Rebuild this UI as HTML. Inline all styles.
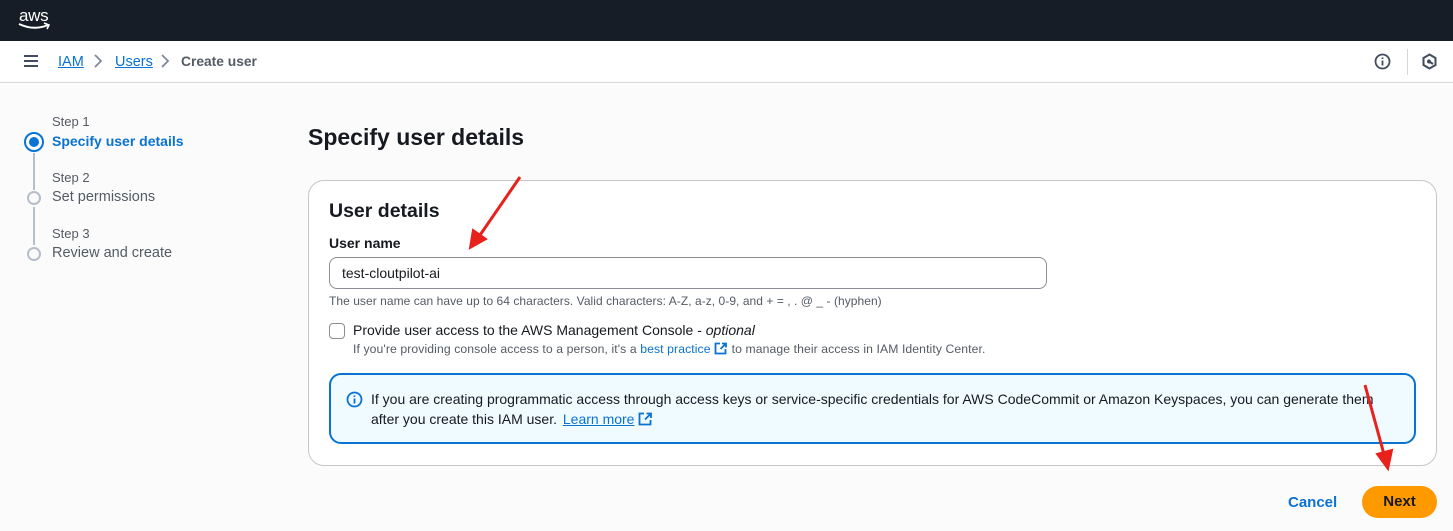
<!DOCTYPE html>
<html><head><meta charset="utf-8"><style>
*{margin:0;padding:0;box-sizing:border-box}
body{width:1453px;height:531px;overflow:hidden;background:#fbfbfb;font-family:"Liberation Sans",Arial,sans-serif;color:#16191f;position:relative}
.a{position:absolute}
a{color:#0972d3}
</style></head><body>
<div class="a" style="left:0;top:0;width:1453px;height:41px;background:#161d26"></div>
<div class="a" style="left:19px;top:6px;color:#fff;font-size:17px;letter-spacing:-0.3px">aws</div>
<svg class="a" style="left:18px;top:22px" width="34" height="9"><path d="M1 2 Q16 9 30 3" stroke="#fff" stroke-width="2" fill="none"/><path d="M26 1 L31 3 L29 7" stroke="#fff" stroke-width="1.6" fill="none"/></svg>
<div class="a" style="left:0;top:41px;width:1453px;height:42px;background:#fff;border-bottom:1px solid #d5d7db"></div>
<svg class="a" style="left:23px;top:54px" width="16" height="14"><path d="M1 2H15M1 7H15M1 12H15" stroke="#414d5c" stroke-width="2"/></svg>
<div class="a" style="left:58px;top:54px;font-size:14.5px"><a style="text-decoration:underline">IAM</a></div>
<svg class="a" style="left:93px;top:54px" width="10" height="14"><path d="M2 1L8 7L2 13" stroke="#7d8998" stroke-width="1.8" fill="none"/></svg>
<div class="a" style="left:115px;top:54px;font-size:14.5px"><a style="text-decoration:underline">Users</a></div>
<svg class="a" style="left:160px;top:54px" width="10" height="14"><path d="M2 1L8 7L2 13" stroke="#7d8998" stroke-width="1.8" fill="none"/></svg>
<div class="a" style="left:181px;top:54px;font-size:13.8px;font-weight:bold;color:#545b64">Create user</div>
<svg class="a" style="left:1374px;top:53px" width="17" height="17"><circle cx="8.5" cy="8.5" r="7" stroke="#414d5c" stroke-width="1.8" fill="none"/><path d="M8.5 7.5V12.5M8.5 4.5V6" stroke="#414d5c" stroke-width="1.8"/></svg>
<div class="a" style="left:1407px;top:49px;width:1px;height:26px;background:#d5d7db"></div>
<svg class="a" style="left:1421px;top:53px" width="17" height="17"><path d="M8.5 1.5L14.5 5V12L8.5 15.5L2.5 12V5Z" stroke="#414d5c" stroke-width="2" fill="none"/><circle cx="8" cy="8.5" r="2" fill="#414d5c"/><path d="M9 9L12 11" stroke="#414d5c" stroke-width="2"/></svg>

<div class="a" style="left:52px;top:114px;font-size:13px;color:#545b64">Step 1</div>
<div class="a" style="left:52px;top:133px;font-size:14px;font-weight:bold;color:#0972d3">Specify user details</div>
<div class="a" style="left:24px;top:132px;width:20px;height:20px;border:2px solid #0972d3;border-radius:50%;background:#fff"></div>
<div class="a" style="left:29px;top:137px;width:10px;height:10px;border-radius:50%;background:#0972d3"></div>
<div class="a" style="left:33px;top:153px;width:2px;height:37px;background:#b6bec9"></div>
<div class="a" style="left:52px;top:170px;font-size:13px;color:#545b64">Step 2</div>
<div class="a" style="left:52px;top:189px;font-size:14.5px;color:#545b64">Set permissions</div>
<div class="a" style="left:27px;top:191px;width:14px;height:14px;border:2px solid #b6bec9;border-radius:50%"></div>
<div class="a" style="left:33px;top:207px;width:2px;height:38px;background:#b6bec9"></div>
<div class="a" style="left:52px;top:226px;font-size:13px;color:#545b64">Step 3</div>
<div class="a" style="left:52px;top:245px;font-size:14.5px;color:#545b64">Review and create</div>
<div class="a" style="left:27px;top:247px;width:14px;height:14px;border:2px solid #b6bec9;border-radius:50%"></div>

<div class="a" style="left:308px;top:124px;font-size:23px;font-weight:bold">Specify user details</div>
<div class="a" style="left:308px;top:180px;width:1129px;height:286px;background:#fff;border:1px solid #c6c6cd;border-radius:16px"></div>
<div class="a" style="left:329px;top:200px;font-size:19.5px;font-weight:bold">User details</div>
<div class="a" style="left:329px;top:235px;font-size:14px;font-weight:bold">User name</div>
<div class="a" style="left:329px;top:257px;width:718px;height:32px;border:1px solid #8c8c94;border-radius:8px;background:#fff;padding:7px 12px;font-size:14px">test-cloutpilot-ai</div>
<div class="a" style="left:329px;top:294px;font-size:12px;color:#545b64;letter-spacing:0.05px">The user name can have up to 64 characters. Valid characters: A-Z, a-z, 0-9, and + = , . @ _ - (hyphen)</div>
<div class="a" style="left:329px;top:323px;width:16px;height:16px;border:1.5px solid #8c8c94;border-radius:4px;background:#fff"></div>
<div class="a" style="left:353px;top:322px;font-size:14px">Provide user access to the AWS Management Console - <i>optional</i></div>
<div class="a" style="left:353px;top:342px;font-size:12.2px;color:#545b64;letter-spacing:0.1px">If you're providing console access to a person, it's a <span style="color:#0972d3">best practice</span> <svg width="14" height="13" style="vertical-align:-2px"><path d="M6 1.5H1.5V11.5H11.5V7M8 1.5H12V5.5M12 1.5L6.5 7" stroke="#0972d3" stroke-width="1.8" fill="none"/></svg> to manage their access in IAM Identity Center.</div>
<div class="a" style="left:329px;top:373px;width:1087px;height:71px;background:#f0fbff;border:2px solid #0972d3;border-radius:12px"></div>
<svg class="a" style="left:346px;top:391px" width="17" height="17"><circle cx="8.5" cy="8.5" r="7" stroke="#0972d3" stroke-width="1.8" fill="none"/><path d="M8.5 7.5V12.5M8.5 4.5V6" stroke="#0972d3" stroke-width="1.8"/></svg>
<div class="a" style="left:371px;top:389px;font-size:14px;line-height:20px;width:1030px">If you are creating programmatic access through access keys or service-specific credentials for AWS CodeCommit or Amazon Keyspaces, you can generate them after you create this IAM user. <a style="text-decoration:underline;margin-left:2px">Learn more</a> <svg width="15" height="14" style="vertical-align:-2px"><path d="M6 1.5H1.5V12.5H12.5V8M8.5 1.5H13V6M13 1.5L7 7.5" stroke="#0972d3" stroke-width="1.8" fill="none"/></svg></div>

<div class="a" style="left:1288px;top:494px;font-size:15px;font-weight:bold;color:#0972d3">Cancel</div>
<div class="a" style="left:1362px;top:486px;width:75px;height:32px;background:#ff9900;border-radius:16px;font-size:15px;font-weight:bold;text-align:center;line-height:32px">Next</div>

<svg class="a" style="left:0;top:0" width="1453" height="531">
<path d="M520 177L478 238" stroke="#e8211d" stroke-width="3"/><path d="M470 248L473 230L486 239Z" fill="#e8211d" stroke="#e8211d" stroke-width="2"/>
<path d="M1365 385L1385 458" stroke="#e8211d" stroke-width="3"/><path d="M1388 469L1377 454L1392 450Z" fill="#e8211d" stroke="#e8211d" stroke-width="2"/>
</svg>
</body></html>
